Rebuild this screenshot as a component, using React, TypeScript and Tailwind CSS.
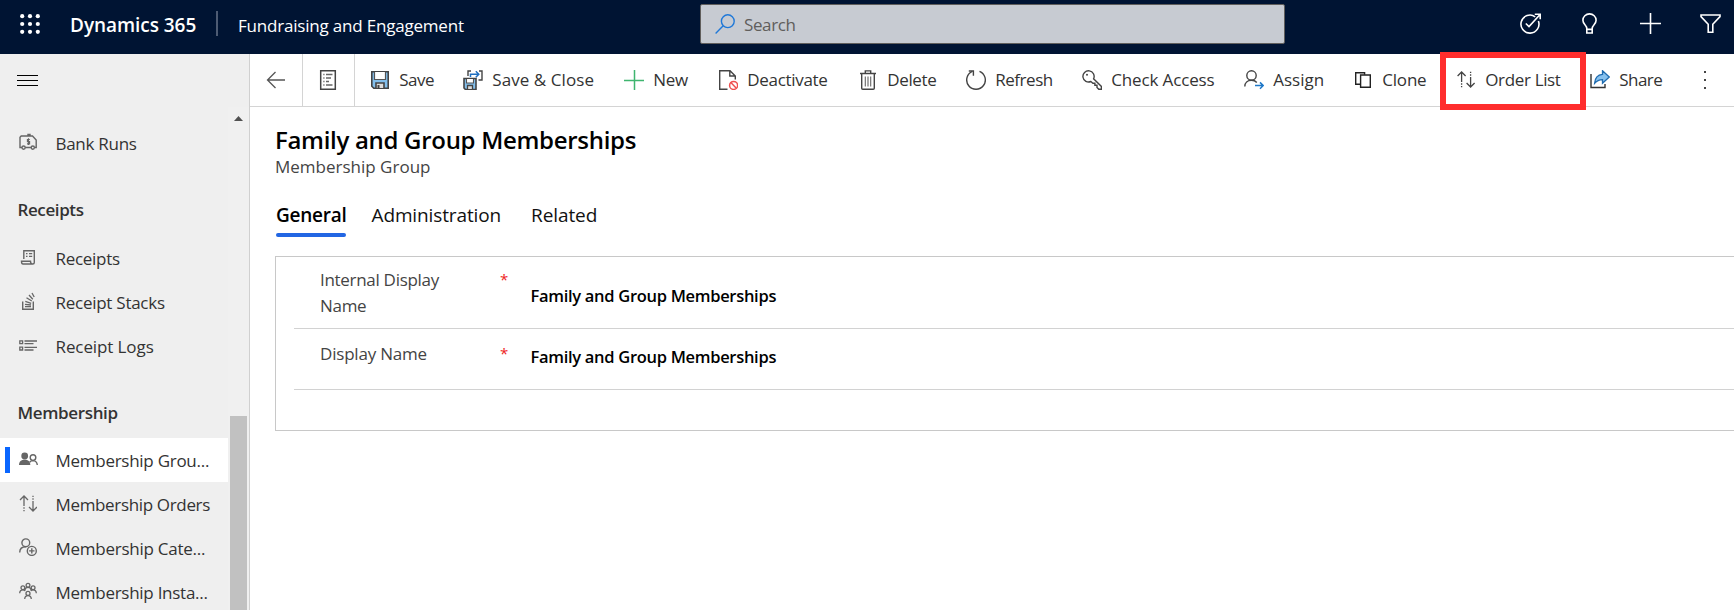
import React from "react";

type IconProps = { children: React.ReactNode; size?: number; className?: string };

function Icon({ children, size = 20, className = "" }: IconProps) {
  return (
    <svg
      width={size}
      height={size}
      viewBox={`0 0 ${size} ${size}`}
      fill="none"
      stroke="currentColor"
      strokeWidth={1.4}
      className={`shrink-0 ${className}`}
    >
      {children}
    </svg>
  );
}

const SaveIcon = (
  <Icon>
    <path d="M1.8 1.8H18.2V18.2H3.8L1.8 16.2Z" fill="#83bfec" stroke="#444" strokeWidth="1.6" />
    <path d="M4.5 2V9.5H15.5V2" fill="#fff" stroke="#555" strokeWidth="1.2" />
    <path d="M6 18V13H14V18" fill="#ddd" stroke="#444" strokeWidth="1.6" />
    <path d="M8.5 15V18" stroke="#444" strokeWidth="2" />
  </Icon>
);

const SaveCloseIcon = (
  <Icon>
    <path d="M5 6V1H8M16 1H19V10H15.5" stroke="#444" />
    <path d="M7.5 7V4.2H15.5M12.8 1.2L15.8 4.2L12.8 7.2" stroke="#1f6fc0" strokeWidth="1.5" />
    <path d="M1 8.5H13V19.5H2.5L1 18Z" fill="#83bfec" stroke="#444" strokeWidth="1.6" />
    <path d="M3.5 9V13H10.5V9" fill="#fff" stroke="#555" strokeWidth="1.1" />
    <path d="M4.5 19V15.5H9.5V19" fill="#ddd" stroke="#444" strokeWidth="1.3" />
  </Icon>
);

const NewIcon = (
  <Icon className="text-[#3fb56f]">
    <path d="M10.5 0V20M0 10.5H20" strokeWidth="1.5" />
  </Icon>
);

const DeactivateIcon = (
  <Icon>
    <path d="M9.5 19.3H1.7V.7H12L17.3 6V9.5M11.8 1V6H17" stroke="#444" />
    <circle cx="15.6" cy="15.4" r="4" fill="#fff" stroke="#ef5050" strokeWidth="1.5" />
    <path d="M12.9 12.6L18.3 18.2" stroke="#ef5050" strokeWidth="1.5" />
  </Icon>
);

const DeleteIcon = (
  <Icon>
    <path d="M2 3.5H18M7.3 3.3V.9H12.7V3.3M3.7 3.7V18.2Q3.7 19.3 4.8 19.3H15.2Q16.3 19.3 16.3 18.2V3.7" stroke="#444" />
    <path d="M7.3 6.5V16.5M10 6.5V16.5M12.7 6.5V16.5" stroke="#666" strokeWidth="1.1" />
  </Icon>
);

const RefreshIcon = (
  <Icon>
    <path d="M13.5 1.3A9.3 9.3 0 1 1 6.3 1.4" stroke="#444" />
    <path d="M2.8 1H7.4V5.8" stroke="#444" />
  </Icon>
);

const KeyIcon = (
  <Icon>
    <path
      d="M11.6 8.8A5.6 5.6 0 1 0 8.9 11.5L10.9 13.2H12.9V15.3H15V17.4L16.8 19.3H19.4V16.4Z"
      stroke="#444"
    />
    <circle cx="5" cy="4.8" r="1" fill="#444" stroke="none" />
  </Icon>
);

const AssignIcon = (
  <Icon>
    <circle cx="7.5" cy="5.5" r="4.7" stroke="#444" />
    <path d="M.8 16.5C.8 12.8 3.6 10.3 7.5 10.3C9.7 10.3 11.5 11 12.8 12.4" stroke="#444" />
    <path d="M11 15.6H19M16 12.4L19.2 15.6L16 18.8" stroke="#1f78c8" strokeWidth="1.5" />
  </Icon>
);

const CloneIcon = (
  <Icon>
    <path d="M7 14.3H2.7V2.7H11.6V4.8" stroke="#222" />
    <path d="M7.6 5H17.3V17.3H7.6Z" stroke="#222" />
  </Icon>
);

const OrderArrows = (
  <>
    <path d="M5 2V12M5 13.2V14.8M5 16V17.3M1 6L5 2L9 6" strokeWidth="1.3" />
    <path d="M14 17V7M14 5.8V4.2M14 3V1.7M10 13L14 17L18 13" strokeWidth="1.3" />
  </>
);

const OrderIcon = (
  <Icon className="text-[#444]">
    <g transform="translate(.6 0)">{OrderArrows}</g>
  </Icon>
);

const ShareIcon = (
  <Icon>
    <path d="M1 4V17.5H15V14" stroke="#333" />
    <path
      d="M12.5 .8L19.3 7L12.5 13.2V9.6C9.3 9.5 7 10.6 4.6 13.4C5 8.3 8 4.7 12.5 4.4Z"
      fill="#86c1ef"
      stroke="#1f6cb0"
      strokeWidth="1.3"
    />
  </Icon>
);

const commands = [
  { label: "Save", icon: SaveIcon, width: "w-[93px]", tracking: "tracking-[-0.5px]" },
  { label: "Save & Close", icon: SaveCloseIcon, width: "w-[161px]", tracking: "tracking-[0.08px]" },
  { label: "New", icon: NewIcon, width: "w-[94px]", tracking: "tracking-[-0.25px]" },
  { label: "Deactivate", icon: DeactivateIcon, width: "w-[140px]", tracking: "tracking-[-0.3px]" },
  { label: "Delete", icon: DeleteIcon, width: "w-[108px]", tracking: "tracking-[-0.35px]" },
  { label: "Refresh", icon: RefreshIcon, width: "w-[116px]", tracking: "tracking-[-0.47px]" },
  { label: "Check Access", icon: KeyIcon, width: "w-[162px]", tracking: "tracking-[-0.14px]" },
  { label: "Assign", icon: AssignIcon, width: "w-[109px]", tracking: "tracking-normal" },
  { label: "Clone", icon: CloneIcon, width: "w-[103px]", tracking: "tracking-[-0.2px]" },
  { label: "Order List", icon: OrderIcon, width: "w-[134px]", tracking: "tracking-[-0.35px]" },
  { label: "Share", icon: ShareIcon, width: "w-[105px]", tracking: "tracking-[-0.55px]" },
];

const BankIcon = (
  <Icon size={18}>
    <path d="M3 14.5H1V4.3L2.2 3H13.5L17.2 7V14.5H16M6.2 14.5H12M9 3V1.5H11V3" />
    <circle cx="4.6" cy="14.6" r="1.6" />
    <circle cx="13.8" cy="14.6" r="1.6" />
    <path d="M10.8 6.5H8.4V8.6H10.6V10.9H8M9.5 5.3V12" strokeWidth="1.1" />
  </Icon>
);

const ReceiptIcon = (
  <Icon size={18}>
    <path d="M4.8 11V2.7H15.3V14.5Q15.3 16 13.8 16H4Q2.5 16 2.5 13.2H11.5Q11.5 16 13.4 16" />
    <path d="M7 5.7H8.5M10 5.7H13.2M7 8.4H8.5M10 8.4H13.2" strokeWidth="1.3" />
  </Icon>
);

const StackIcon = (
  <Icon size={18}>
    <path d="M3.7 9.5V17.3H14.3V9.5" />
    <path d="M6 14.7H12M6 12.3L12 13M6.3 9.3L12.2 11.3M7.5 5.8L12.8 9M10 3L13.8 7.2M13 1L15.2 5" strokeWidth="1.3" />
  </Icon>
);

const LogsIcon = (
  <Icon size={18}>
    <path d="M.8 4.8H3.6V7.6H.8ZM.8 11.2H3.6V14H.8Z" strokeWidth="1.3" />
    <path d="M5.5 5H18M5.5 7.6H14.5M5.5 11.4H18M5.5 14H14.5" strokeWidth="1.3" />
  </Icon>
);

const GroupIcon = (
  <Icon size={20} className="-mr-0.5">
    <circle cx="5.7" cy="7" r="3.4" fill="currentColor" stroke="none" />
    <path d="M0 16C0 12.5 2.3 10.8 5.7 10.8S11.3 12.5 11.3 16Z" fill="currentColor" stroke="none" />
    <circle cx="14" cy="8.6" r="2.8" />
    <path d="M10.6 13.2Q12 11.6 14 11.6Q18 11.8 18.3 16" />
  </Icon>
);

const CategoryIcon = (
  <Icon size={18}>
    <circle cx="6.8" cy="4.8" r="3.9" />
    <path d="M.7 14.5C.8 11 3.2 8.8 6.8 8.8" />
    <circle cx="12.8" cy="12.9" r="4.5" />
    <path d="M12.8 10.2V15.6M10.1 12.9H15.5" />
  </Icon>
);

const InstanceIcon = (
  <Icon size={18}>
    <circle cx="9" cy="3.3" r="1.9" strokeWidth="1.3" />
    <circle cx="3.9" cy="5.7" r="1.9" strokeWidth="1.3" />
    <circle cx="14.1" cy="5.7" r="1.9" strokeWidth="1.3" />
    <circle cx="9" cy="11.4" r="2" strokeWidth="1.3" />
    <path d="M5.8 8.2Q6.3 5.4 9 5.4T12.2 8.2M.7 11.2Q.8 7.8 3.9 7.8Q5.4 7.8 6.2 9M17.3 11.2Q17.2 7.8 14.1 7.8Q12.6 7.8 11.8 9M5.7 17Q5.9 13.6 9 13.6T12.3 17" strokeWidth="1.3" />
  </Icon>
);

type NavProps = { label: string; icon: React.ReactNode; tracking: string; active?: boolean };

function NavItem({ label, icon, tracking, active }: NavProps) {
  return (
    <a className={`flex h-11 w-[228px] shrink-0 items-center ${active ? "bg-white" : ""}`}>
      <span className={`ml-[5px] mr-[9px] h-[26px] w-[5px] ${active ? "bg-[#0a66ff]" : ""}`} />
      <span className="mb-0.5 text-[#666]">{icon}</span>
      <span className={`ml-[18.5px] whitespace-nowrap pt-0.5 ${tracking}`}>{label}</span>
    </a>
  );
}

type FieldProps = { label: React.ReactNode; tracking: string; className: string; valueClass: string };

function FieldRow({ label, tracking, className, valueClass }: FieldProps) {
  return (
    <div className={`ml-[18px] flex border-b border-[#d2d2d2] pl-[26px] ${className}`}>
      <div className={`w-[180px] leading-[26px] text-[#444] ${tracking}`}>{label}</div>
      <div className="-mt-px w-[30.5px] text-[15px] leading-[26px] text-[#ee2222]">*</div>
      <div className={`whitespace-nowrap text-[16.5px] font-semibold leading-[26px] tracking-[-0.3px] text-black ${valueClass}`}>
        Family and Group Memberships
      </div>
    </div>
  );
}

export default function App() {
  return (
    <div className="flex h-[610px] w-[1734px] flex-col overflow-hidden bg-white font-['Open_Sans',sans-serif] text-[17px] text-[#333]">
      <header className="flex h-[54px] shrink-0 items-center bg-[#001433] text-white">
        <svg width="20" height="20" viewBox="0 0 20 20" fill="#fff" className="mb-1.5 ml-[19.5px]">
          {[2.2, 10, 17.8].map((y) => [2.2, 10, 17.8].map((x) => <circle key={`${x}-${y}`} cx={x} cy={y} r="2.1" />))}
        </svg>
        <div className="ml-[30.5px] w-[146px] whitespace-nowrap pb-1 text-[19px] font-semibold tracking-[-0.05px]">Dynamics 365</div>
        <div className="mb-2 h-[25px] w-[2px] bg-[#4d5b73]" />
        <div className="ml-5 w-[462px] whitespace-nowrap pb-[3px] tracking-[-0.2px]">Fundraising and Engagement</div>
        <div className="mb-1.5 flex h-10 w-[585px] items-center rounded-[2px] border border-[#605e5c] bg-[#c7cbd2] text-[#605e5c]">
          <svg width="20" height="20" viewBox="0 0 20 20" fill="none" stroke="#1f78d8" strokeWidth="1.4" className="ml-[14px]">
            <circle cx="12.8" cy="7.2" r="6.4" />
            <path d="M8.2 11.8L.6 19.4" />
          </svg>
          <span className="ml-[9px] pt-0.5 tracking-[-0.38px]">Search</span>
        </div>
        <div className="mb-2 ml-auto flex w-[214.5px] items-center">
          <Icon size={21} className="mr-[41px]">
            <path d="M15.2 3.8A9 9 0 1 0 18.4 8" strokeWidth="1.6" />
            <path d="M5.8 10.5L9 13.6L19.6 2M14.8 1.2H20.2V6.2" strokeWidth="1.6" />
          </Icon>
          <svg width="15" height="21" viewBox="0 0 15 21" fill="none" stroke="currentColor" strokeWidth="1.6" className="mr-[43px] shrink-0">
            <path d="M4.8 15.5C4.8 12 .9 11.3 .9 7.3A6.6 6.4 0 0 1 14.1 7.3C14.1 11.3 10.2 12 10.2 15.5V20H4.8ZM4.8 16.4H10.2" />
          </svg>
          <Icon size={21} className="mr-[39px]">
            <path d="M10.5 0V21M0 10.5H21" strokeWidth="1.6" />
          </Icon>
          <Icon size={21}>
            <path d="M1 2H20V3.6L12.8 11.2V19.2H8.2V11.2L1 3.6Z" strokeWidth="1.6" />
          </Icon>
        </div>
      </header>

      <div className="flex min-h-0 flex-1">
        <aside className="flex w-[250px] shrink-0 flex-col border-r border-[#d0d0d0] bg-[#efefef]">
          <div className="flex h-[53px] shrink-0 flex-col gap-1 pl-[17px] pt-[21px]">
            <span className="h-px w-[21px] shrink-0 bg-black" />
            <span className="h-px w-[21px] shrink-0 bg-black" />
            <span className="h-px w-[21px] shrink-0 bg-black" />
          </div>
          <div className="flex min-h-0 flex-1 overflow-hidden">
            <nav className="flex w-[228px] shrink-0 flex-col pt-[14px]">
              <NavItem label="Bank Runs" icon={BankIcon} tracking="tracking-[-0.28px]" />
              <h2 className="h-[71px] shrink-0 pl-[17.5px] pt-[33px] font-semibold leading-6 tracking-[-0.4px]">Receipts</h2>
              <NavItem label="Receipts" icon={ReceiptIcon} tracking="tracking-[-0.29px]" />
              <NavItem label="Receipt Stacks" icon={StackIcon} tracking="tracking-[-0.26px]" />
              <NavItem label="Receipt Logs" icon={LogsIcon} tracking="tracking-[-0.1px]" />
              <h2 className="h-[70px] shrink-0 pl-[17.5px] pt-[33px] font-semibold leading-6 tracking-[-0.36px]">Membership</h2>
              <NavItem label="Membership Grou..." icon={GroupIcon} tracking="tracking-[-0.27px]" active />
              <NavItem label="Membership Orders" icon={<Icon size={18}>{OrderArrows}</Icon>} tracking="tracking-[-0.34px]" />
              <NavItem label="Membership Cate..." icon={CategoryIcon} tracking="tracking-[-0.25px]" />
              <NavItem label="Membership Insta..." icon={InstanceIcon} tracking="tracking-[-0.27px]" />
            </nav>
            <div className="flex flex-1 flex-col items-center bg-[#f0f0f0] pt-[9px]">
              <svg width="9" height="5" viewBox="0 0 9 5" fill="#505050">
                <path d="M4.5 0L9 5H0Z" />
              </svg>
              <div className="mt-[295px] w-[17px] flex-1 bg-[#c1c1c1]" />
            </div>
          </div>
        </aside>

        <main className="flex min-w-0 flex-1 flex-col">
          <div className="relative flex h-[53px] shrink-0 items-center border-b border-[#d4d4d4]">
            <div className="flex h-full w-[53px] items-center justify-center border-r border-[#d4d4d4]">
              <Icon className="text-[#555]">
                <path d="M1.5 10H19M9.5 2L1.5 10L9.5 18" strokeWidth="1.3" />
              </Icon>
            </div>
            <div className="flex h-full w-[52px] items-center justify-center border-r border-[#d4d4d4] pr-px">
              <Icon className="text-[#444]">
                <path d="M2.7 .7H17.3V19.3H2.7Z" strokeWidth="1.5" />
                <path d="M5.3 4.5H6.5M8 4.5H14.5M5.3 8H6.5M8 8H13M5.3 11.5H6.5M8 11.5H11M5.3 15H6.5M8 15H14.5" stroke="#666" strokeWidth="1.3" />
              </Icon>
            </div>
            <div className="flex h-full items-center pl-[15px]">
              {commands.map((c) => (
                <button key={c.label} className={`flex shrink-0 items-center gap-[9.25px] whitespace-nowrap text-left ${c.width} ${c.tracking}`}>
                  {c.icon}
                  <span>{c.label}</span>
                </button>
              ))}
              <svg width="20" height="20" viewBox="0 0 20 20" fill="#444">
                <path d="M9 1h2v2H9zM9 9h2v2H9zM9 17h2v2H9z" />
              </svg>
            </div>
            <div className="absolute left-[1190px] top-[-2px] h-[58px] w-[146px] border-[6px] border-[#ff2d2d]" />
          </div>

          <div className="flex flex-col pl-[25px] pt-[17px]">
            <h1 className="text-[24px] font-semibold leading-8 tracking-[-0.3px] text-black">Family and Group Memberships</h1>
            <p className="-mt-px h-[40px] leading-6 text-[#444]">Membership Group</p>
            <div className="flex h-[43px] text-[19px] leading-[40px] text-[#111]">
              <div className="ml-px h-[41px] w-[70px] font-semibold tracking-[-0.23px] text-black">
                General
                <div className="-mt-0.5 h-1 rounded-full bg-[#2266e3]" />
              </div>
              <div className="ml-[25.5px] w-[159.5px] tracking-[-0.12px]">Administration</div>
              <div className="tracking-[-0.08px]">Related</div>
            </div>
            <section className="mt-[18px] h-[175px] border border-r-0 border-[#c8c8c8]">
              <FieldRow
                label={<>Internal Display<br />Name</>}
                tracking="tracking-[-0.3px]"
                className="h-[72px] pt-[10px]"
                valueClass="pt-[16px]"
              />
              <FieldRow label="Display Name" tracking="tracking-[-0.2px]" className="h-[61px] pt-[12px]" valueClass="pt-[3px]" />
            </section>
          </div>
        </main>
      </div>
    </div>
  );
}
